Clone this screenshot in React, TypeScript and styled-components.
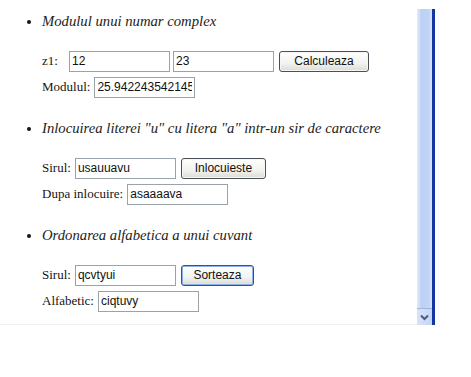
import React from "react";
import styled, { createGlobalStyle } from "styled-components";

const GlobalStyle = createGlobalStyle`
  html, body {
    margin: 0;
    padding: 0;
    background: #ffffff;
  }
`;

const Frame = styled.div`
  display: flex;
  width: 435px;
  height: 325px;
`;

const Content = styled.div`
  width: 417px;
  height: 325px;
  border-bottom: 1px solid #f1f1f4;
  box-sizing: border-box;
  font-family: "Liberation Serif", "Times New Roman", serif;
  color: #151515;
`;

const List = styled.ul`
  margin: 0;
  padding: 11px 0 0 42px;
  list-style: disc;
`;

const Item = styled.li`
  margin-bottom: 20px;
  font-size: 14px;
`;

const Heading = styled.div`
  font-style: italic;
  font-size: 14.7px;
  line-height: 20px;
  color: #222;
`;

const Form = styled.div`
  display: flex;
  flex-direction: column;
  gap: 4px;
  margin-top: 19px;
`;

const Row = styled.div`
  display: flex;
  align-items: center;
  gap: 3px;
  height: 22px;
`;

const Label = styled.span<{ $minWidth?: number }>`
  font-size: 13px;
  margin-right: 1px;
  min-width: ${(p) => (p.$minWidth ? `${p.$minWidth}px` : "auto")};
`;

const Field = styled.input`
  width: 101px;
  height: 21px;
  box-sizing: border-box;
  border: 1px solid #9aa2aa;
  padding: 1px 2px;
  font-family: "Liberation Sans", Arial, sans-serif;
  font-size: 12px;
  color: #111;
  background: #fff;
  outline: none;
`;

const Button = styled.button<{ $width: number; $focused?: boolean }>`
  width: ${(p) => p.$width}px;
  height: 21px;
  margin-left: 2px;
  box-sizing: border-box;
  border: 1px solid #4a5058;
  border-radius: 3px;
  background: linear-gradient(#ffffff, #f2f2ee 60%, #dcdcd6);
  box-shadow: ${(p) =>
    p.$focused ? "inset 0 0 0 1px #8eb2ef" : "inset 0 0 0 1px #f6f6f6"};
  font-family: "Liberation Sans", Arial, sans-serif;
  font-size: 12px;
  color: #111;
  padding: 0;
`;

const Scrollbar = styled.div`
  display: flex;
  margin-top: 9px;
  height: 316px;
`;

const Track = styled.div`
  width: 15px;
  display: flex;
  flex-direction: column;
  justify-content: flex-end;
  background: linear-gradient(90deg, #e4ecfb, #bcd0f6 30%, #c2d4f7 80%, #dbe5f8);
`;

const ArrowButton = styled.div`
  height: 16px;
  display: flex;
  align-items: center;
  justify-content: center;
  border-top: 1px solid #9fb4da;
  background: linear-gradient(90deg, #d8e3fa, #c5d5f7);
`;

const Edge = styled.div`
  width: 3px;
  background: #14369e;
`;

export default function App() {
  return (
    <>
      <GlobalStyle />
      <Frame>
        <Content>
          <List>
            <Item>
              <Heading>Modulul unui numar complex</Heading>
              <Form>
                <Row>
                  <Label $minWidth={23}>z1:</Label>
                  <Field defaultValue="12" />
                  <Field defaultValue="23" />
                  <Button $width={90}>Calculeaza</Button>
                </Row>
                <Row>
                  <Label>Modulul:</Label>
                  <Field defaultValue="25.942243542145693" />
                </Row>
              </Form>
            </Item>
            <Item>
              <Heading>Inlocuirea literei "u" cu litera "a" intr-un sir de caractere</Heading>
              <Form>
                <Row>
                  <Label>Sirul:</Label>
                  <Field defaultValue="usauuavu" />
                  <Button $width={85}>Inlocuieste</Button>
                </Row>
                <Row>
                  <Label>Dupa inlocuire:</Label>
                  <Field defaultValue="asaaaava" />
                </Row>
              </Form>
            </Item>
            <Item>
              <Heading>Ordonarea alfabetica a unui cuvant</Heading>
              <Form>
                <Row>
                  <Label>Sirul:</Label>
                  <Field defaultValue="qcvtyui" />
                  <Button $width={73} $focused>
                    Sorteaza
                  </Button>
                </Row>
                <Row>
                  <Label>Alfabetic:</Label>
                  <Field defaultValue="ciqtuvy" />
                </Row>
              </Form>
            </Item>
          </List>
        </Content>
        <Scrollbar>
          <Track>
            <ArrowButton>
              <svg width="9" height="7" viewBox="0 0 9 7">
                <path d="M1 1.5 L4.5 5 L8 1.5" fill="none" stroke="#4b5d86" strokeWidth="2" />
              </svg>
            </ArrowButton>
          </Track>
          <Edge />
        </Scrollbar>
      </Frame>
    </>
  );
}
